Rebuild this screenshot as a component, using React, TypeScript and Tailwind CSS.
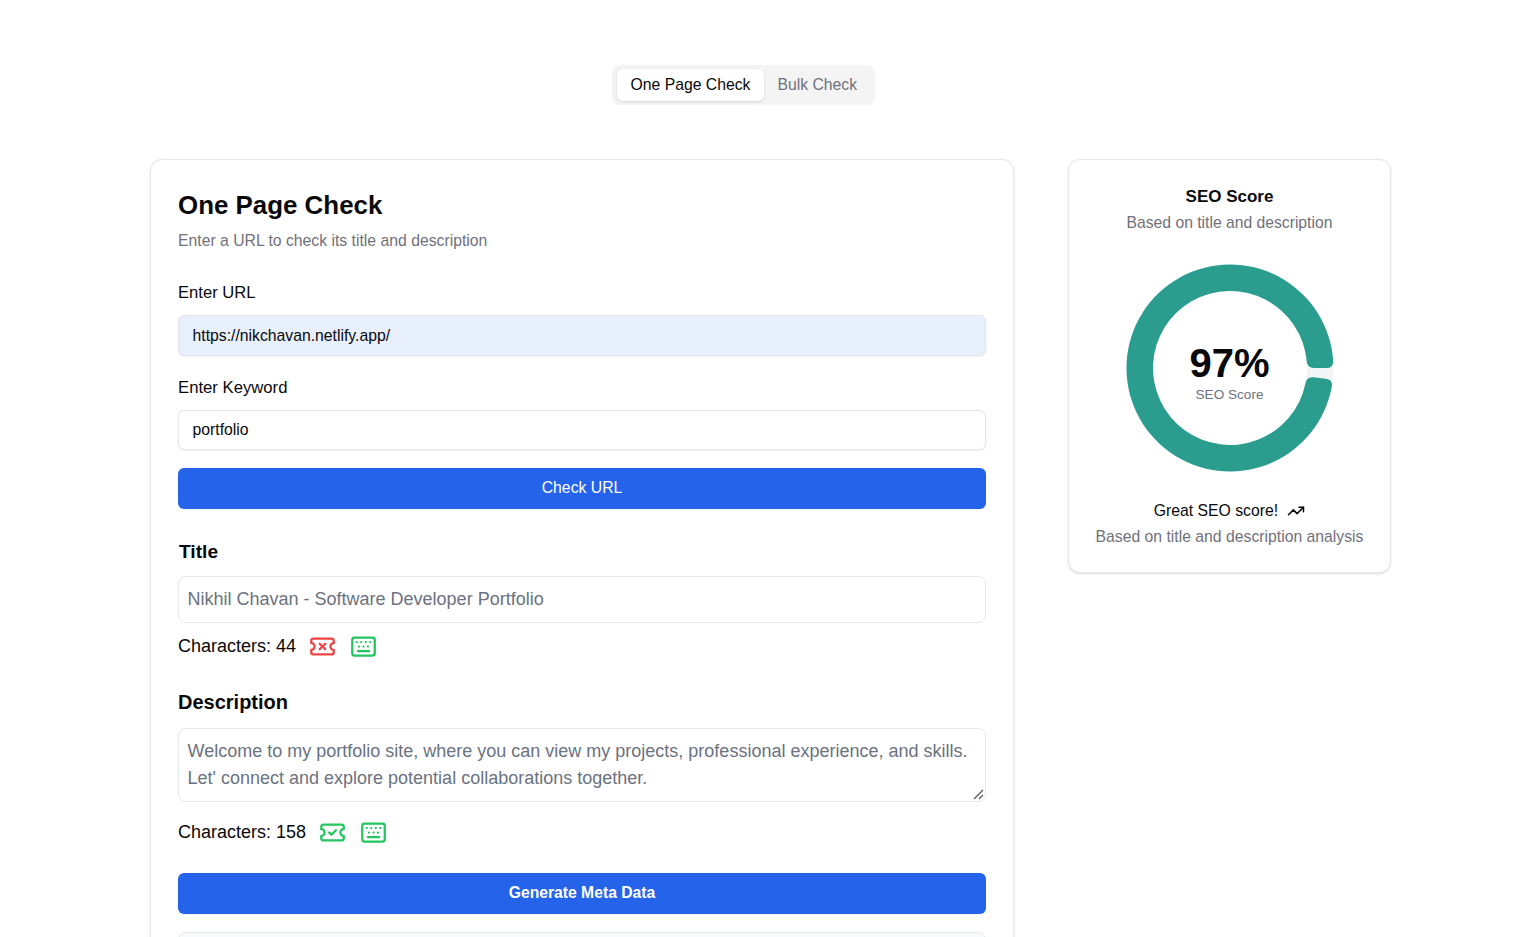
import { Keyboard, TicketCheck, TicketX, TrendingUp } from "lucide-react";

const CX = 104;
const CY = 104;
const OUTER = 103.5;
const INNER = 77;

function pt(r: number, deg: number) {
  const a = (deg * Math.PI) / 180;
  return `${(CX + r * Math.cos(a)).toFixed(2)} ${(CY + r * Math.sin(a)).toFixed(2)}`;
}

// clockwise sector from a0 to a1 with rounded corners
function sector(a0: number, a1: number, c: number) {
  const dOut = (c / OUTER) * (180 / Math.PI);
  const dIn = (c / INNER) * (180 / Math.PI);
  const large = a1 - a0 > 180 ? 1 : 0;
  return [
    `M ${pt(OUTER, a0 + dOut)}`,
    `A ${OUTER} ${OUTER} 0 ${large} 1 ${pt(OUTER, a1 - dOut)}`,
    `Q ${pt(OUTER, a1)} ${pt(OUTER - c, a1)}`,
    `L ${pt(INNER + c, a1)}`,
    `Q ${pt(INNER, a1)} ${pt(INNER, a1 - dIn)}`,
    `A ${INNER} ${INNER} 0 ${large} 0 ${pt(INNER, a0 + dIn)}`,
    `Q ${pt(INNER, a0)} ${pt(INNER + c, a0)}`,
    `L ${pt(OUTER - c, a0)}`,
    `Q ${pt(OUTER, a0)} ${pt(OUTER, a0 + dOut)}`,
    "Z",
  ].join(" ");
}

function Donut() {
  return (
    <div className="relative w-[208px] h-[208px]">
      <svg width="208" height="208" viewBox="0 0 208 208">
        <path d={sector(-2, 9, 5)} fill="#f3f4f6" />
        <path d={sector(6.4, 360, 7)} fill="#2a9d8f" />
      </svg>
      <div className="absolute inset-0 flex flex-col items-center justify-center">
        <span className="text-[40px] leading-[40px] font-bold text-[#09090b] mt-[12px]">97%</span>
        <span className="text-[13.6px] leading-[20px] text-[#6b7280] mt-[2px]">SEO Score</span>
      </div>
    </div>
  );
}

function CharCount({ n, ok }: { n: number; ok: boolean }) {
  return (
    <div className="flex items-center gap-[13.5px] text-lg leading-7 text-[#09090b]">
      <span>Characters: {n}</span>
      {ok ? (
        <TicketCheck className="w-[27px] h-[27px] -ml-px mr-px text-[#22c55e]" />
      ) : (
        <TicketX className="w-[27px] h-[27px] -ml-px mr-px text-[#ef4444]" />
      )}
      <Keyboard className="w-[27px] h-[27px] text-[#22c55e]" />
    </div>
  );
}

export default function App() {
  return (
    <div
      className="h-screen overflow-hidden bg-white text-[#09090b] pl-[150px] pt-[65px]"
      style={{ fontFamily: '"Liberation Sans", Arial, sans-serif' }}
    >
      <div className="w-[1187px] flex justify-center">
        <div className="flex items-center h-10 w-[263px] p-1 pl-[5px] rounded-lg bg-[#f4f4f5] text-[15.75px]">
          <div className="h-8 px-[13.5px] flex items-center rounded-md bg-white shadow-sm">One Page Check</div>
          <div className="h-8 px-[13.5px] flex items-center text-[#71717a]">Bulk Check</div>
        </div>
      </div>

      <div className="flex items-start gap-[54px] mt-[54px]">
        <div className="w-[864px] shrink-0 rounded-xl border border-[#e5e7eb] bg-white shadow-sm px-[27px] pt-[27px]">
          <h1 className="text-[25.9px] leading-[36px] font-bold">One Page Check</h1>
          <p className="text-[15.75px] leading-6 text-[#71717a] mt-[6px]">Enter a URL to check its title and description</p>

          <label className="block text-[16.6px] leading-6 mt-[28px]">Enter URL</label>
          <div className="h-[41px] mt-[10px] px-[13.5px] flex items-center rounded-md border border-[#e4e4e7] bg-[#e8f0fe] text-[15.75px] shadow-xs">
            https://nikchavan.netlify.app/
          </div>

          <label className="block text-[16.7px] leading-6 mt-[20px]">Enter Keyword</label>
          <div className="h-10 mt-[10px] px-[13.5px] flex items-center rounded-md border border-[#e4e4e7] bg-white text-[15.75px] shadow-xs">
            portfolio
          </div>

          <button className="w-full h-[41px] mt-[18px] pb-[1px] rounded-md bg-[#2563eb] text-white text-[15.75px] shadow-xs">Check URL</button>

          <h2 className="text-[19.2px] leading-7 font-bold mt-[29px] ml-px">Title</h2>
          <div className="h-[47px] mt-[10px] px-[8.5px] pb-[1px] flex items-center rounded-lg border border-[#e5e7eb] text-lg text-[#6b7280]">
            Nikhil Chavan - Software Developer Portfolio
          </div>
          <div className="mt-[9px]">
            <CharCount n={44} ok={false} />
          </div>

          <h2 className="text-xl leading-7 font-bold mt-[28px]">Description</h2>
          <div className="relative h-[74px] mt-[12px] px-[8.5px] pt-[9px] rounded-lg border border-[#e5e7eb] text-lg leading-[27px] text-[#6b7280]">
            Welcome to my portfolio site, where you can view my projects, professional experience, and skills.
            <br />
            Let' connect and explore potential collaborations together.
            <svg className="absolute right-[1px] bottom-[1px]" width="12" height="12" viewBox="0 0 12 12">
              <path d="M11 2 L2 11 M11 7 L7 11" stroke="#555" strokeWidth="1.2" />
            </svg>
          </div>
          <div className="mt-[16px]">
            <CharCount n={158} ok={true} />
          </div>

          <button className="w-full h-[41px] mt-[27px] pb-[1px] rounded-md bg-[#2563eb] text-white text-[15.7px] font-bold shadow-xs">Generate Meta Data</button>

          <div className="h-40 mt-[18px] rounded-lg border border-[#e5e7eb] bg-[#f9fafb]" />
        </div>

        <div className="w-[323px] shrink-0 h-[414px] rounded-xl border border-[#e5e7eb] bg-white shadow-sm flex flex-col items-center">
          <h3 className="text-[17px] leading-7 font-bold mt-[23px]">SEO Score</h3>
          <p className="text-[15.7px] leading-6 text-[#71717a]">Based on title and description</p>
          <div className="mt-[29px]">
            <Donut />
          </div>
          <div className="flex items-center gap-[9px] text-[15.75px] leading-6 mt-[27px]">
            Great SEO score!
            <TrendingUp className="w-[18px] h-[18px]" />
          </div>
          <p className="text-[15.75px] leading-6 text-[#71717a] mt-[2px]">Based on title and description analysis</p>
        </div>
      </div>
    </div>
  );
}
